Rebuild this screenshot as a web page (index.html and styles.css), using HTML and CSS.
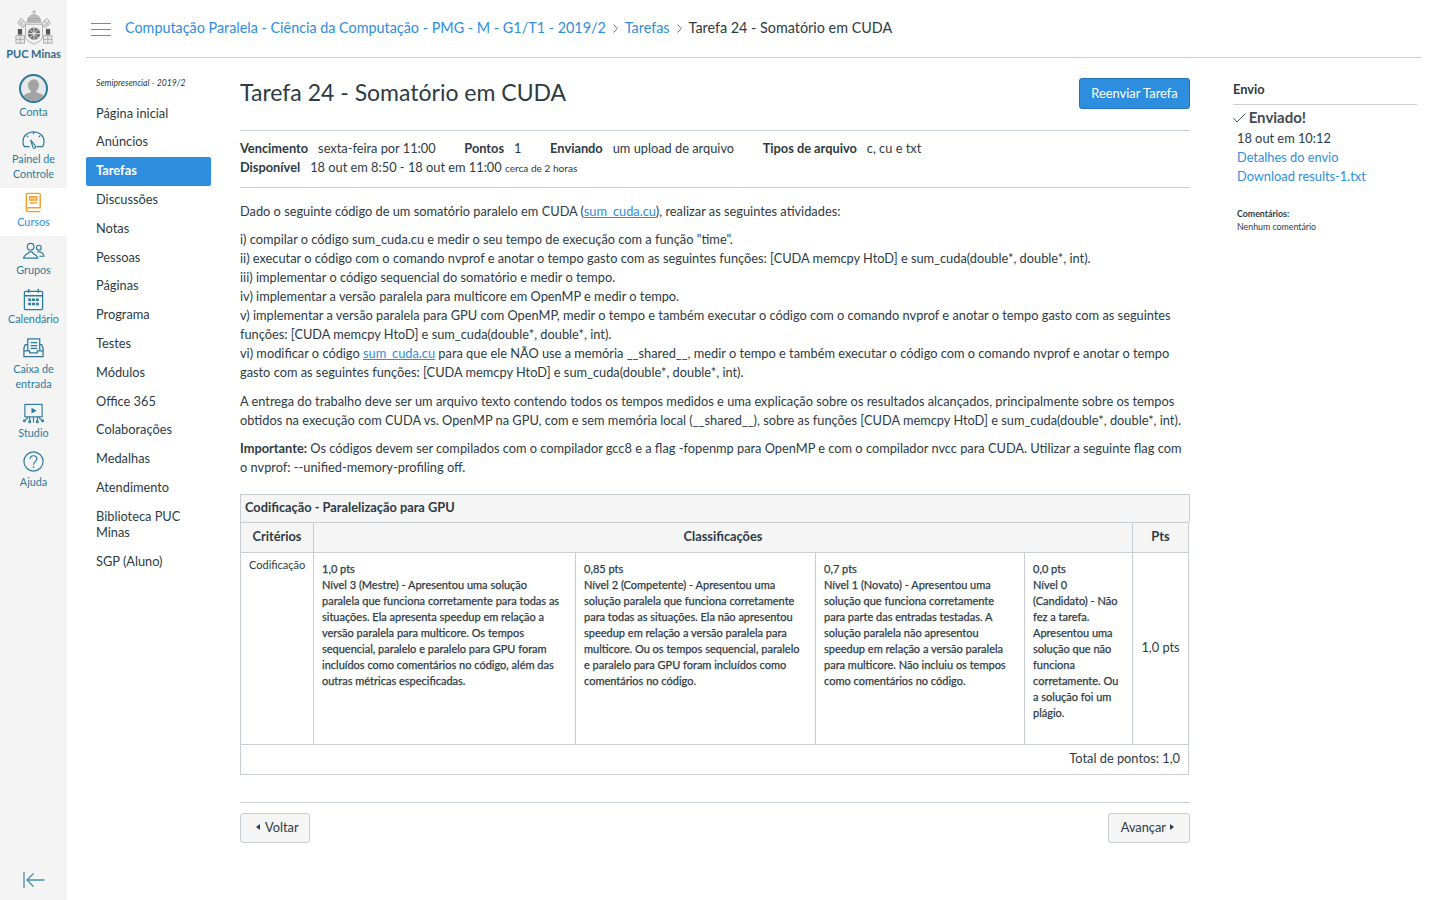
FILE: index.html
```html
<!DOCTYPE html>
<html lang="pt-BR">
<head>
    <meta charset="UTF-8">
    <meta name="viewport" content="width=device-width, initial-scale=1.0">
    <title>Tarefa 24 - Somatório em CUDA</title>
    <link rel="stylesheet" href="styles.css">
</head>
<body>
<div class="app">

    <aside class="rail">
        <a class="rail-logo">
            <svg width="42" height="38" viewBox="0 0 44 40" fill="none" stroke="#a9a9a9" stroke-width="1">
                <path d="M22 1v5M20 3h4"/>
                <path d="M15 14c0-5 3-8 7-8s7 3 7 8z" fill="#bdbdbd"/>
                <path d="M16 10h12M15.500 12h13"/>
                <path d="M8 10l6 5-4 5-5-5zM36 10l-6 5 4 5 5-5z" fill="#e9e9e9"/>
                <path d="M6 13l5 5M38 13l-5 5M11 12l-3 5M33 12l3 5"/>
                <rect x="5" y="21" width="4.500" height="6" fill="#555" stroke="none"/>
                <rect x="34.500" y="21" width="4.500" height="6" fill="#555" stroke="none"/>
                <path d="M13 16h18v13c0 4-5 6-9 8-4-2-9-4-9-8z" fill="#f2f2f2"/>
                <circle cx="22" cy="26" r="6.500" fill="#6f6f6f" stroke="none"/>
                <path d="M15.500 26h13M22 19.500v13M17.500 21.500l9 9M26.500 21.500l-9 9" stroke="#eee"/>
                <path d="M3 28h9v8H3zM32 28h9v8h-9z" fill="#e9e9e9"/>
                <path d="M3 32h9M7.500 28v8M32 32h9M36.500 28v8"/>
            </svg>
            <span class="logo-name">PUC Minas</span>
        </a>
        <a class="rail-item rail-conta">
            <span class="avatar">
                <svg width="24" height="24" viewBox="0 0 24 24"><path d="M12 2.500c3.200 0 5 2.600 5 5.800 0 2.600-1.300 4.700-2.800 5.500v1.500c2.800 1 6.400 1.900 8 4.200-2.200 2.800-6.100 4.500-10.200 4.500S3 22.300.8 19.500c1.600-2.300 5.200-3.200 8-4.200v-1.500C7.300 13 6 10.900 6 8.300c0-3.200 2.800-5.800 6-5.800z" fill="#a3a3a3"/></svg>
            </span>
            Conta
        </a>
        <a class="rail-item">
            <svg class="rail-icon" viewBox="0 0 24 24" fill="none" stroke="#2b7a9e" stroke-width="1.200">
                <path d="M8 19.500H2.500C1.500 18 1 16 1 14 1 8 6 4 12 4s11 4 11 10c0 2-.5 4-1.500 5.500H15.500"/>
                <path d="M9 12.500l2.500 8c.5 1.200 3.300 .5 3-1z"/>
                <path d="M12 4v2.500M5 8l1.500 1.500M19 8l-1.500 1.500"/>
            </svg>
            <span>Painel de Controle</span>
        </a>
        <a class="rail-item active">
            <svg class="rail-icon" viewBox="0 0 24 24" fill="none" stroke="#f59e2e" stroke-width="1.500">
                <path d="M4.500 19V3.500c0-.5 .4-1 1-1h12.500c.5 0 1 .5 1 1V17.500H7c-1.500 0-2.500 .8-2.500 2S5.500 21.500 7 21.500h12"/>
                <rect x="8" y="6" width="7.500" height="3.500" fill="#fbd9a8"/>
                <path d="M8 12.500h7.500"/>
            </svg>
            Cursos
        </a>
        <a class="rail-item rail-grupos">
            <svg class="rail-icon" viewBox="0 0 24 24" fill="none" stroke="#2b7a9e" stroke-width="1.200">
                <circle cx="9" cy="8" r="3.500"/>
                <circle cx="17.500" cy="9" r="2.500"/>
                <path d="M1.500 20c.5-3 3-4 5-5l1-1.500h3l1 1.500c2 1 4 2 5 5z"/>
                <path d="M16 13.500h3c2 .5 3.500 1.800 4 4.500h-5"/>
            </svg>
            Grupos
        </a>
        <a class="rail-item">
            <svg class="rail-icon" viewBox="0 0 24 24" fill="none" stroke="#2b7a9e" stroke-width="1.300">
                <rect x="2.500" y="3.500" width="19" height="19" rx="1"/>
                <path d="M7 1v4M17 1v4M2.500 8h19" stroke-width="1.500"/>
                <path d="M6.500 11h3v2.500h-3zM10.500 11h3v2.500h-3zM14.500 11h3v2.500h-3zM6.500 15.500h3V18h-3zM10.500 15.500h3V18h-3zM14.500 15.500h3V18h-3z" fill="#2b7a9e" stroke="none"/>
            </svg>
            Calendário
        </a>
        <a class="rail-item rail-tall rail-caixa">
            <svg class="rail-icon" viewBox="0 0 24 24" fill="none" stroke="#2b7a9e" stroke-width="1.300">
                <path d="M6 15V3h12.500v12"/>
                <path d="M9 7h7M9 10h7M9 13h7"/>
                <path d="M6 9H3.500L2 12.500V21.500h20v-9L20.500 9h-2"/>
                <path d="M2 15.500h6v2h8v-2h6"/>
            </svg>
            <span>Caixa de entrada</span>
        </a>
        <a class="rail-item">
            <svg class="rail-icon" viewBox="0 0 24 24" fill="none" stroke="#2b7a9e" stroke-width="1.200">
                <rect x="3" y="2.500" width="18" height="13"/>
                <path d="M10.500 7l3.500 2-3.500 2z" fill="#2b7a9e"/>
                <path d="M8 15.500v4M12 15.500v6M16 15.500v4M6 15.500c0 3-2 3-3 3.500M18 15.500c0 3 2 3 3 3.500"/>
                <circle cx="2.500" cy="19.500" r="1"/>
                <circle cx="8" cy="20.500" r="1"/>
                <circle cx="16" cy="20.500" r="1"/>
                <circle cx="21.500" cy="19.500" r="1"/>
            </svg>
            Studio
        </a>
        <a class="rail-item rail-ajuda">
            <svg class="rail-icon" viewBox="0 0 24 24" fill="none" stroke="#2b7a9e" stroke-width="1.200">
                <circle cx="12" cy="12" r="10"/>
                <path d="M8.500 9.500c0-2 1.500-3.500 3.500-3.500s3.500 1.500 3.500 3.300c0 2.700-3.500 2.900-3.500 6"/>
                <path d="M12 17v1.500" stroke-width="1.500"/>
            </svg>
            Ajuda
        </a>
        <a class="rail-collapse">
            <svg width="22" height="16" viewBox="0 0 22 16" fill="none" stroke="#4a90ad" stroke-width="1.300">
                <path d="M1 0v16M21.500 8H4M10.500 1.500L4 8l6.500 6.500"/>
            </svg>
        </a>
    </aside>

    <div class="page">
        <header class="topbar">
            <svg class="hamburger" width="20" height="13" viewBox="0 0 20 13" fill="none" stroke="#3c9bea" stroke-width="1.200">
                <path d="M0 .5h20M0 6.500h20M0 12.500h20"/>
            </svg>
            <nav class="crumbs">
                <a>Computação Paralela - Ciência da Computação - PMG - M - G1/T1 - 2019/2</a>
                <svg class="crumb-sep" width="5" height="9" viewBox="0 0 5 9" fill="none" stroke="#6b7780"><path d="M.5 .5l4 4-4 4"/></svg>
                <a>Tarefas</a>
                <svg class="crumb-sep" width="5" height="9" viewBox="0 0 5 9" fill="none" stroke="#6b7780"><path d="M.5 .5l4 4-4 4"/></svg>
                <span>Tarefa 24 - Somatório em CUDA</span>
            </nav>
        </header>

        <div class="columns">
            <nav class="course-nav">
                <div class="term">Semipresencial - 2019/2</div>
                <a>Página inicial</a>
                <a>Anúncios</a>
                <a class="current">Tarefas</a>
                <a>Discussões</a>
                <a>Notas</a>
                <a>Pessoas</a>
                <a>Páginas</a>
                <a>Programa</a>
                <a>Testes</a>
                <a>Módulos</a>
                <a>Office 365</a>
                <a>Colaborações</a>
                <a>Medalhas</a>
                <a>Atendimento</a>
                <a>Biblioteca PUC Minas</a>
                <a>SGP (Aluno)</a>
            </nav>

            <main class="content">
                <div class="title-row">
                    <h1>Tarefa 24 - Somatório em CUDA</h1>
                    <button class="btn-primary">Reenviar Tarefa</button>
                </div>

                <div class="details">
                    <div class="details-line">
                        <span class="detail"><b>Vencimento</b>sexta-feira por 11:00</span>
                        <span class="detail"><b>Pontos</b>1</span>
                        <span class="detail"><b>Enviando</b>um upload de arquivo</span>
                        <span class="detail"><b>Tipos de arquivo</b>c, cu e txt</span>
                    </div>
                    <div class="details-line">
                        <span class="detail"><b>Disponível</b>18 out em 8:50 - 18 out em 11:00 <small>cerca de 2 horas</small></span>
                    </div>
                </div>

                <div class="description">
                    <p>Dado o seguinte código de um somatório paralelo em CUDA (<a>sum_cuda.cu</a>), realizar as seguintes atividades:</p>
                    <p>i) compilar o código sum_cuda.cu e medir o seu tempo de execução com a função "time".<br>
                    ii) executar o código com o comando nvprof e anotar o tempo gasto com as seguintes funções: [CUDA memcpy HtoD] e sum_cuda(double*, double*, int).<br>
                    iii) implementar o código sequencial do somatório e medir o tempo.<br>
                    iv) implementar a versão paralela para multicore em OpenMP e medir o tempo.<br>
                    v) implementar a versão paralela para GPU com OpenMP, medir o tempo e também executar o código com o comando nvprof e anotar o tempo gasto com as seguintes funções: [CUDA memcpy HtoD] e sum_cuda(double*, double*, int).<br>
                    vi) modificar o código <a>sum_cuda.cu</a> para que ele NÃO use a memória __shared__, medir o tempo e também executar o código com o comando nvprof e anotar o tempo gasto com as seguintes funções: [CUDA memcpy HtoD] e sum_cuda(double*, double*, int).</p>
                    <p>A entrega do trabalho deve ser um arquivo texto contendo todos os tempos medidos e uma explicação sobre os resultados alcançados, principalmente sobre os tempos obtidos na execução com CUDA vs. OpenMP na GPU, com e sem memória local (__shared__), sobre as funções [CUDA memcpy HtoD] e sum_cuda(double*, double*, int).</p>
                    <p><strong>Importante:</strong> Os códigos devem ser compilados com o compilador gcc8 e a flag -fopenmp para OpenMP e com o compilador nvcc para CUDA. Utilizar a seguinte flag com o nvprof: --unified-memory-profiling off.</p>
                </div>

                <div class="rubric">
                    <div class="rubric-title">Codificação - Paralelização para GPU</div>
                    <table class="rubric-table">
                        <colgroup>
                            <col class="col-crit">
                            <col class="col-r1">
                            <col class="col-r2">
                            <col class="col-r3">
                            <col class="col-r4">
                            <col class="col-pts">
                        </colgroup>
                        <tr class="head-row">
                            <th>Critérios</th>
                            <th colspan="4">Classificações</th>
                            <th>Pts</th>
                        </tr>
                        <tr class="rating-row">
                            <td class="crit">Codificação</td>
                            <td class="rating">1,0 pts<br>Nível 3 (Mestre) - Apresentou uma solução paralela que funciona corretamente para todas as situações. Ela apresenta speedup em relação a versão paralela para multicore. Os tempos sequencial, paralelo e paralelo para GPU foram incluídos como comentários no código, além das outras métricas especificadas.</td>
                            <td class="rating">0,85 pts<br>Nível 2 (Competente) - Apresentou uma solução paralela que funciona corretamente para todas as situações. Ela não apresentou speedup em relação a versão paralela para multicore. Ou os tempos sequencial, paralelo e paralelo para GPU foram incluídos como comentários no código.</td>
                            <td class="rating">0,7 pts<br>Nível 1 (Novato) - Apresentou uma solução que funciona corretamente para parte das entradas testadas. A solução paralela não apresentou speedup em relação a versão paralela para multicore. Não incluiu os tempos como comentários no código.</td>
                            <td class="rating">0,0 pts<br>Nível 0 (Candidato) - Não fez a tarefa. Apresentou uma solução que não funciona corretamente. Ou a solução foi um plágio.</td>
                            <td class="pts">1,0 pts</td>
                        </tr>
                        <tr class="total-row">
                            <td colspan="6">Total de pontos: 1,0</td>
                        </tr>
                    </table>
                </div>

                <div class="pager">
                    <a class="btn"><span class="arrow-left"></span>Voltar</a>
                    <a class="btn btn-next">Avançar<span class="arrow-right"></span></a>
                </div>
            </main>

            <aside class="submission">
                <h2>Envio</h2>
                <div class="sent">
                    <svg class="sent-check" width="13" height="10" viewBox="0 0 13 10" fill="none" stroke="#4a5761"><path d="M.5 5l3.500 4L12.500 .5"/></svg>
                    Enviado!
                </div>
                <div class="sub-info">
                    <div>18 out em 10:12</div>
                    <a>Detalhes do envio</a>
                    <a>Download results-1.txt</a>
                </div>
                <div class="comments">
                    <b>Comentários:</b>
                    <div>Nenhum comentário</div>
                </div>
            </aside>
        </div>
    </div>

</div>
</body>
</html>
```

FILE: styles.css
```css
* {
    box-sizing: border-box;
}
body {
    margin: 0;
    font-family: Lato, "Open Sans", sans-serif;
    font-size: 12.800px;
    line-height: 19px;
    color: #2d3b45;
    background: #fff;
}
a {
    color: #2d8ee0;
    text-decoration: none;
}
.app {
    display: flex;
    height: 900px;
    overflow: hidden;
}

/* left rail */
.rail {
    width: 67px;
    flex-shrink: 0;
    height: 900px;
    background: #f4f4f4;
    display: flex;
    flex-direction: column;
    align-items: stretch;
    position: relative;
}
.rail-logo {
    height: 73px;
    padding-top: 9px;
    display: flex;
    flex-direction: column;
    align-items: center;
}
.logo-name {
    font-size: 11px;
    font-weight: 700;
    line-height: 13px;
    color: #2e6a90;
    white-space: nowrap;
}
.rail-item {
    display: flex;
    flex-direction: column;
    align-items: center;
    text-align: center;
    font-size: 10.800px;
    line-height: 15px;
    color: #2b7a9e;
    padding: 3px 4px 7px;
}
.rail-icon {
    width: 23px;
    height: 23px;
    flex-shrink: 0;
}
.rail-tall .rail-icon {
    margin-bottom: 2px;
}
.rail-grupos {
    padding-bottom: 8px;
}
.rail-caixa {
    padding-bottom: 8px;
}
.rail-ajuda .rail-icon {
    margin-bottom: 1px;
}
.rail-conta {
    padding: 0 4px 6px;
}
.rail-conta .avatar {
    width: 29px;
    height: 29px;
    border: 2px solid #2b7a9e;
    border-radius: 50%;
    overflow: hidden;
    background: #e8e8e8;
    display: flex;
    align-items: flex-end;
    justify-content: center;
    margin: 1px 0 1px;
}
.rail-item.active {
    background: #fff;
    color: #2d8ee0;
}
.rail-collapse {
    position: absolute;
    left: 23px;
    bottom: 12px;
    display: block;
    line-height: 0;
}

/* top breadcrumb */
.page {
    flex: 1;
    padding: 0 19px;
    min-width: 0;
}
.topbar {
    height: 58px;
    border-bottom: 1px solid #c7cdd1;
    display: flex;
    align-items: center;
    padding: 0 0 2px 5px;
}
.hamburger {
    margin-right: 14px;
    margin-top: 4px;
}
.crumbs {
    font-size: 14.360px;
    display: flex;
    align-items: center;
    white-space: nowrap;
}
.crumb-sep {
    margin: 2px 7px 0;
}

.columns {
    display: flex;
}

/* course nav */
.course-nav {
    width: 125px;
    flex-shrink: 0;
    padding-top: 18px;
}
.term {
    font-size: 8.700px;
    font-style: italic;
    line-height: 14px;
    padding-left: 10px;
    margin-bottom: 9.200px;
}
.course-nav a {
    display: block;
    color: #2d3b45;
    line-height: 16px;
    padding: 5.500px 10px 7.300px;
    border-radius: 2px;
}
.course-nav a.current {
    background: #2d8ee0;
    color: #fff;
    font-weight: 700;
}

/* assignment */
.content {
    width: 950px;
    margin-left: 29px;
    flex-shrink: 0;
}
.title-row {
    display: flex;
    justify-content: space-between;
    align-items: flex-start;
    height: 73px;
    padding-top: 20px;
    border-bottom: 1px solid #c7cdd1;
}
h1 {
    margin: -1px 0 0;
    font-size: 23px;
    font-weight: 400;
    line-height: 30px;
}
.btn-primary {
    background: #2d8ee0;
    border: 1px solid #2273b9;
    border-radius: 3px;
    color: #fff;
    font: 12.900px Lato, sans-serif;
    height: 31px;
    width: 111px;
    padding: 0 0 2px;
}
.details {
    padding: 8px 0 10px;
    border-bottom: 1px solid #c7cdd1;
}
.details-line {
    display: flex;
    gap: 28.600px;
    height: 19px;
}
.detail b {
    margin-right: 10px;
}
.detail small {
    font-size: 10.100px;
    line-height: 1;
}
.description {
    padding-top: 13.600px;
}
.description p {
    margin: 0 0 9.500px;
}
.description a {
    text-decoration: underline;
}
strong, b {
    font-weight: 700;
}

/* rubric */
.rubric {
    margin-top: 17.400px;
    width: 950px;
}
.rubric-title {
    height: 28px;
    border: 1px solid #c7cdd1;
    border-bottom: 0;
    background: #f5f5f5;
    font-weight: 700;
    line-height: 25px;
    padding-left: 4px;
}
.rubric-table {
    width: 949px;
    table-layout: fixed;
    border-collapse: collapse;
}
.rubric-table th, .rubric-table td {
    border: 1px solid #c7cdd1;
    vertical-align: top;
}
.col-crit { width: 73px; }
.col-r1 { width: 262px; }
.col-r2 { width: 240px; }
.col-r3 { width: 209px; }
.col-r4 { width: 108px; }
.head-row th {
    height: 30px;
    background: #f5f5f5;
    vertical-align: middle;
    font-weight: 700;
    padding: 0 0 2px;
}
.rating-row {
    height: 192px;
}
.rubric-table .crit {
    font-size: 11px;
    line-height: 16px;
    padding: 4px 8px;
    white-space: nowrap;
}
.rubric-table .rating {
    font-size: 11px;
    line-height: 16px;
    color: #2d3b45;
    -webkit-text-stroke: .25px #2d3b45;
    padding: 8px 8px 0;
}
.rubric-table .pts {
    vertical-align: middle;
    text-align: center;
    padding: 0 0 2px;
}
.rubric-table .total-row td {
    height: 30px;
    text-align: right;
    vertical-align: middle;
    padding: 0 8px 2px 0;
}

/* prev next */
.pager {
    margin-top: 27px;
    border-top: 1px solid #c7cdd1;
    padding-top: 10px;
    display: flex;
    justify-content: space-between;
}
.btn {
    height: 30px;
    padding: 0 10px 2px 12px;
    border: 1px solid #c7cdd1;
    border-radius: 3px;
    background: #f5f5f5;
    color: #2d3b45;
    display: flex;
    align-items: center;
}
.btn-next {
    padding-right: 15px;
}
.arrow-left {
    border: 3px solid transparent;
    border-right: 4px solid #2d3b45;
    border-left: 0;
    margin: 0 5px 0 3px;
}
.arrow-right {
    border: 3px solid transparent;
    border-left: 4px solid #2d3b45;
    border-right: 0;
    margin-left: 4px;
}

/* submission sidebar */
.submission {
    width: 184px;
    margin-left: 43px;
    flex-shrink: 0;
    padding-top: 22px;
}
h2 {
    margin: 0;
    font-size: 12.800px;
    font-weight: 700;
    line-height: 19px;
    padding-bottom: 5px;
    border-bottom: 1px solid #c7cdd1;
}
.sent {
    font-size: 15px;
    font-weight: 700;
    line-height: 20px;
    margin-top: 2px;
    color: #3f4b54;
}
.sent-check {
    margin-right: -1px;
}
.sub-info {
    padding-left: 4px;
    margin-top: 2px;
}
.sub-info a {
    display: block;
}
.comments {
    font-size: 8.800px;
    line-height: 13px;
    padding-left: 4px;
    margin-top: 21px;
}
```
